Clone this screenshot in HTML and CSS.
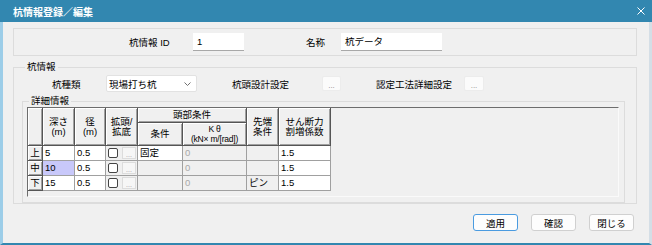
FILE: index.html
```html
<!DOCTYPE html>
<html lang="ja">
<head>
    <meta charset="UTF-8">
    <title>杭情報登録／編集</title>
    <link rel="stylesheet" href="styles.css">
</head>
<body>
    <div class="window">
        <header class="titlebar">
            <span class="titlebar__text">杭情報登録／編集</span>
            <svg class="titlebar__close" viewBox="0 0 8 8">
                <path d="M0.5 0.5 L7.5 7.5 M7.5 0.5 L0.5 7.5" stroke="#fff" stroke-width="1" fill="none"/>
            </svg>
        </header>

        <main class="dialog">
            <div class="box">
                <span class="box__label box__label--id">杭情報 ID</span>
                <div class="textbox textbox--id">1</div>
                <span class="box__label box__label--name">名称</span>
                <div class="textbox textbox--name">杭データ</div>
            </div>

            <fieldset class="group">
                <legend class="group__legend">杭情報</legend>
                <div class="group__row">
                    <span class="row__label row__label--type">杭種類</span>
                    <div class="combo">
                        <span>現場打ち杭</span>
                        <svg class="combo__arrow" viewBox="0 0 7 4">
                            <path d="M0.5 0.5 L3.5 3.5 L6.5 0.5" stroke="#707070" stroke-width="1" fill="none"/>
                        </svg>
                    </div>
                    <span class="row__label row__label--head">杭頭設計設定</span>
                    <button class="dots">...</button>
                    <span class="row__label row__label--method">認定工法詳細設定</span>
                    <button class="dots">...</button>
                </div>

                <fieldset class="group group--detail">
                    <legend class="group__legend group__legend--detail">詳細情報</legend>
                    <div class="grid-panel">
                        <table class="grid">
                            <colgroup>
                                <col class="col-rowhead">
                                <col class="col-depth">
                                <col class="col-dia">
                                <col class="col-ext">
                                <col class="col-cond">
                                <col class="col-ktheta">
                                <col class="col-tip">
                                <col class="col-shear">
                            </colgroup>
                            <tr class="grid__head1">
                                <th rowspan="2"></th>
                                <th rowspan="2">深さ<br>(m)</th>
                                <th rowspan="2">径<br>(m)</th>
                                <th rowspan="2">拡頭/<br>拡底</th>
                                <th colspan="2">頭部条件</th>
                                <th rowspan="2">先端<br>条件</th>
                                <th rowspan="2">せん断力<br>割増係数</th>
                            </tr>
                            <tr class="grid__head2">
                                <th>条件</th>
                                <th class="grid__small">K θ<br>(kN× m/[rad])</th>
                            </tr>
                            <tr class="grid__row">
                                <th class="grid__rowhead">上</th>
                                <td>5</td>
                                <td>0.5</td>
                                <td class="grid__ext"><span class="check"></span><span class="mini-btn">...</span></td>
                                <td>固定</td>
                                <td class="is-gray">0</td>
                                <td class="is-gray"></td>
                                <td>1.5</td>
                            </tr>
                            <tr class="grid__row">
                                <th class="grid__rowhead">中</th>
                                <td class="is-selected">10</td>
                                <td>0.5</td>
                                <td class="grid__ext"><span class="check"></span><span class="mini-btn">...</span></td>
                                <td class="is-gray"></td>
                                <td class="is-gray">0</td>
                                <td class="is-gray"></td>
                                <td>1.5</td>
                            </tr>
                            <tr class="grid__row">
                                <th class="grid__rowhead">下</th>
                                <td>15</td>
                                <td>0.5</td>
                                <td class="grid__ext"><span class="check"></span><span class="mini-btn">...</span></td>
                                <td class="is-gray"></td>
                                <td class="is-gray">0</td>
                                <td class="is-gray is-dark">ピン</td>
                                <td>1.5</td>
                            </tr>
                        </table>
                    </div>
                </fieldset>
            </fieldset>

            <div class="actions">
                <button class="btn btn--default">適用</button>
                <button class="btn">確認</button>
                <button class="btn">閉じる</button>
            </div>
        </main>
    </div>
</body>
</html>
```

FILE: styles.css
```css
* {
    box-sizing: border-box;
}

body {
    margin: 0;
    width: 652px;
    height: 245px;
    overflow: hidden;
    background-color: #f0f0f0;
    font-family: "Liberation Sans", "Noto Sans CJK JP", sans-serif;
    font-size: 9.5px;
    color: #000;
}

button {
    font-family: inherit;
    font-size: inherit;
    cursor: pointer;
}

.window {
    width: 652px;
    height: 245px;
    display: flex;
    flex-direction: column;
}

.titlebar {
    height: 22px;
    flex-shrink: 0;
    display: flex;
    align-items: center;
    justify-content: space-between;
    padding: 0 7px 0 13px;
    background-color: #3287b0;
    color: #fff;
}

.titlebar__text {
    font-size: 10px;
    font-weight: bold;
}

.titlebar__close {
    width: 8px;
    height: 8px;
}

.dialog {
    flex: 1;
    padding: 6px 12px 0 10px;
    border-left: 3px solid #9ccde8;
    border-right: 3px solid #d4dee6;
    border-bottom: 2px solid #3287b0;
}

/* top box */
.box {
    height: 28px;
    display: flex;
    align-items: center;
    border: 1px solid #dcdcdc;
}

.box__label--id {
    margin-left: 115px;
    width: 64px;
}

.box__label--name {
    margin-left: 62px;
    width: 35px;
}

.textbox {
    height: 18px;
    padding-left: 4px;
    line-height: 17px;
    background-color: #fff;
    border-bottom: 1px solid #a8a8a8;
}

.textbox--id {
    width: 51px;
}

.textbox--name {
    width: 101px;
}

/* group boxes */
.group {
    margin: 4px 0 0;
    padding: 1px 11px 0 8px;
    min-width: 0;
    border: 1px solid #dcdcdc;
}

.group__legend {
    margin-left: 3px;
    padding: 0 2px;
    line-height: 14px;
}

.group__row {
    height: 17px;
    display: flex;
    align-items: center;
}

.row__label--type {
    margin-left: 30px;
    width: 54px;
}

.row__label--head {
    margin-left: 35px;
    width: 90px;
}

.row__label--method {
    margin-left: 35px;
    width: 88px;
}

.combo {
    width: 91px;
    height: 17px;
    display: flex;
    align-items: center;
    justify-content: space-between;
    padding: 0 5px 0 2px;
    background-color: #fff;
    border: 1px solid #e2e2e2;
    border-radius: 2px;
}

.combo__arrow {
    width: 7px;
    height: 4px;
}

.dots {
    width: 19px;
    height: 15px;
    padding: 4px 0 0;
    line-height: 10px;
    font-size: 8px;
    color: #8a8a8a;
    background-color: #fbfbfb;
    border: 1px solid #ececec;
    border-radius: 2px;
}

.dots:last-child {
    width: 20px;
}

.group--detail {
    margin: 3px 0 0;
    padding: 0 5px 5px 4px;
}

.group__legend--detail {
    margin-left: 2px;
    line-height: 12px;
}

/* detail grid */
.grid-panel {
    height: 90px;
    background-color: #f0f0f0;
    border-top: 1px solid #6d6d6d;
    border-left: 1px solid #6d6d6d;
    border-right: 1px solid #fafafa;
    border-bottom: 1px solid #fafafa;
}

.grid {
    width: 303px;
    table-layout: fixed;
    border-spacing: 0;
    line-height: 10px;
}

.col-rowhead { width: 15px; }
.col-depth { width: 32px; }
.col-dia { width: 31px; }
.col-ext { width: 32px; }
.col-cond { width: 45px; }
.col-ktheta { width: 64px; }
.col-tip { width: 32px; }
.col-shear { width: 52px; }

.grid th,
.grid td {
    padding: 0 2px;
    white-space: nowrap;
    overflow: hidden;
}

.grid th {
    font-weight: normal;
    text-align: center;
    background-color: #f0f0f0;
    border-right: 1px solid #555;
    border-bottom: 1px solid #555;
    box-shadow: inset 1px 1px 0 #fff, inset -1px -1px 0 #a0a0a0;
}

.grid__head1 {
    height: 15px;
}

.grid__head2 {
    height: 23px;
}

.grid__small {
    font-size: 8.5px;
    letter-spacing: -0.2px;
}

.grid__row {
    height: 15px;
}

.grid td {
    background-color: #fff;
    border-right: 1px solid #a0a0a0;
    border-bottom: 1px solid #a0a0a0;
}

.grid td.is-gray {
    background-color: #f0f0f0;
    color: #a8a8a8;
}

.grid td.is-dark {
    color: #000;
}

.grid td.is-selected {
    background-color: #c8c8fa;
}

.grid td.grid__ext {
    background-color: #f0f0f0;
    padding: 0 0 0 2px;
    font-size: 0;
}

.check {
    display: inline-block;
    vertical-align: middle;
    width: 10px;
    height: 10px;
    background-color: #fff;
    border: 1px solid #444;
    border-radius: 2px;
}

.mini-btn {
    display: inline-block;
    vertical-align: middle;
    width: 14px;
    height: 12px;
    margin-left: 4px;
    font-size: 7px;
    line-height: 13px;
    text-align: center;
    color: #a0a0a0;
    background-color: #f6f6f6;
    border: 1px solid #dcdcdc;
}

/* bottom buttons */
.actions {
    display: flex;
    justify-content: flex-end;
    gap: 13px;
    margin-top: 10px;
    padding-right: 3px;
}

.btn {
    width: 45px;
    height: 17px;
    padding: 0;
    background-color: #fdfdfd;
    border: 1px solid #d0d0d0;
    border-radius: 3px;
}

.btn--default {
    border-color: #4a9be0;
}
```
